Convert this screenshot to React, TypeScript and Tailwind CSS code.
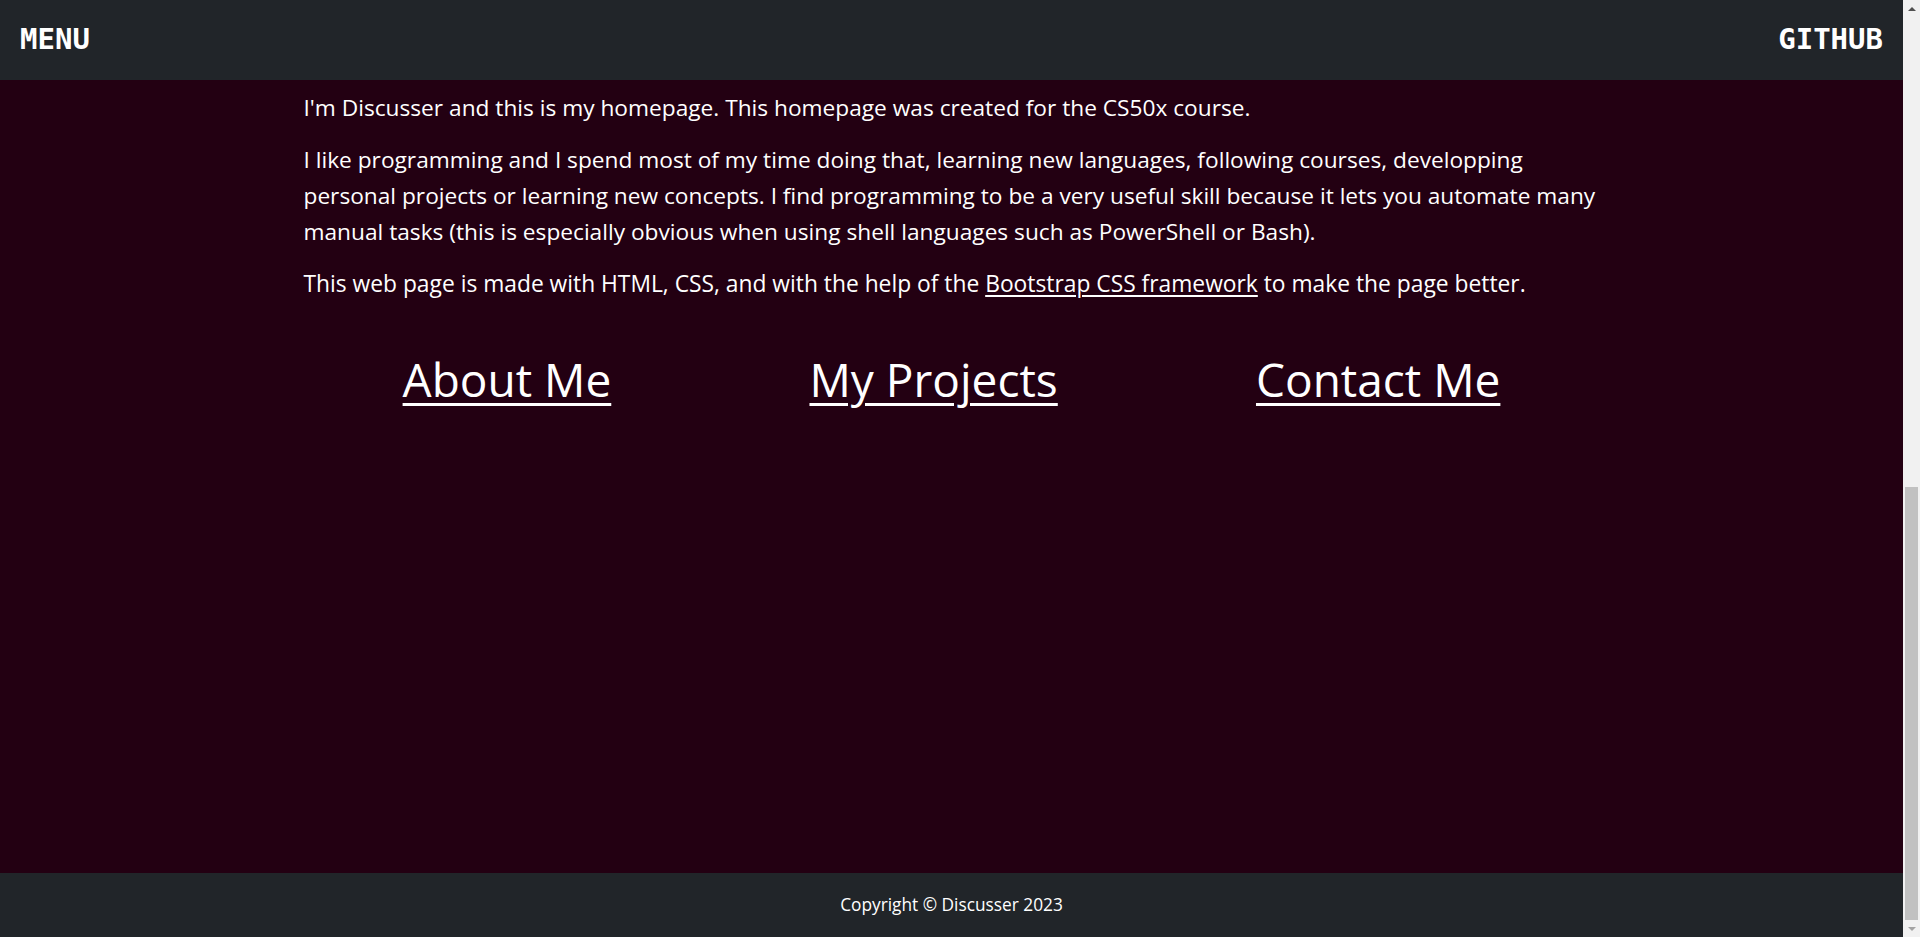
import React from "react";

const sans = "font-['Open_Sans',_'Noto_Sans',_sans-serif]";

export default function App() {
  return (
    <div className="flex h-[937px] w-full overflow-hidden bg-[#230012]">
      <div className="flex w-[1903px] flex-col">
        <header className="flex h-[80px] shrink-0 items-center justify-between bg-[#212529] px-[20px] font-['DejaVu_Sans_Mono',_monospace] text-[29px] font-bold text-white">
          <span>MENU</span>
          <span>GITHUB</span>
        </header>
        <main className={`flex-1 bg-[#230012] text-white ${sans}`}>
          <div className="mx-auto w-[1296px] pt-[10px]">
            <p className="mb-4 text-[22.7px] leading-[36px]">
              I'm Discusser and this is my homepage. This homepage was created for the CS50x course.
            </p>
            <p className="mb-4 text-[22.7px] leading-[36px]">
              <span className="block whitespace-nowrap">
                I like programming and I spend most of my time doing that, learning new languages, following courses, developping
              </span>
              <span className="block whitespace-nowrap">
                personal projects or learning new concepts. I find programming to be a very useful skill because it lets you automate many
              </span>
              <span className="block whitespace-nowrap">
                manual tasks (this is especially obvious when using shell languages such as PowerShell or Bash).
              </span>
            </p>
            <p className="mb-4 text-[22.8px] leading-[36px]">
              This web page is made with HTML, CSS, and with the help of the{" "}
              <a href="#" className="text-white underline decoration-[1.5px] underline-offset-[3px]">
                Bootstrap CSS framework
              </a>{" "}
              to make the page better.
            </p>
            <div className="mt-[48px] flex justify-around text-[46px] leading-[58px]">
              <a href="#" className="text-white underline decoration-[3px] underline-offset-[6px]">About Me</a>
              <a href="#" className="text-white underline decoration-[3px] underline-offset-[6px]">My Projects</a>
              <a href="#" className="text-white underline decoration-[3px] underline-offset-[6px]">Contact Me</a>
            </div>
          </div>
        </main>
        <footer className={`flex h-[64px] shrink-0 items-center justify-center bg-[#212529] text-[17.3px] text-white ${sans}`}>
          Copyright © Discusser 2023
        </footer>
      </div>
      <div className="flex w-[17px] shrink-0 flex-col bg-[#f1f1f1]">
        <div className="flex h-[17px] items-center justify-center">
          <div className="h-0 w-0 border-x-[4px] border-b-[4px] border-x-transparent border-b-[#505050]" />
        </div>
        <div className="flex flex-1 flex-col px-[2px] pt-[470px]">
          <div className="flex-1 bg-[#c1c1c1]" />
        </div>
        <div className="flex h-[17px] items-center justify-center">
          <div className="h-0 w-0 border-x-[4px] border-t-[4px] border-x-transparent border-t-[#a3a3a3]" />
        </div>
      </div>
    </div>
  );
}
